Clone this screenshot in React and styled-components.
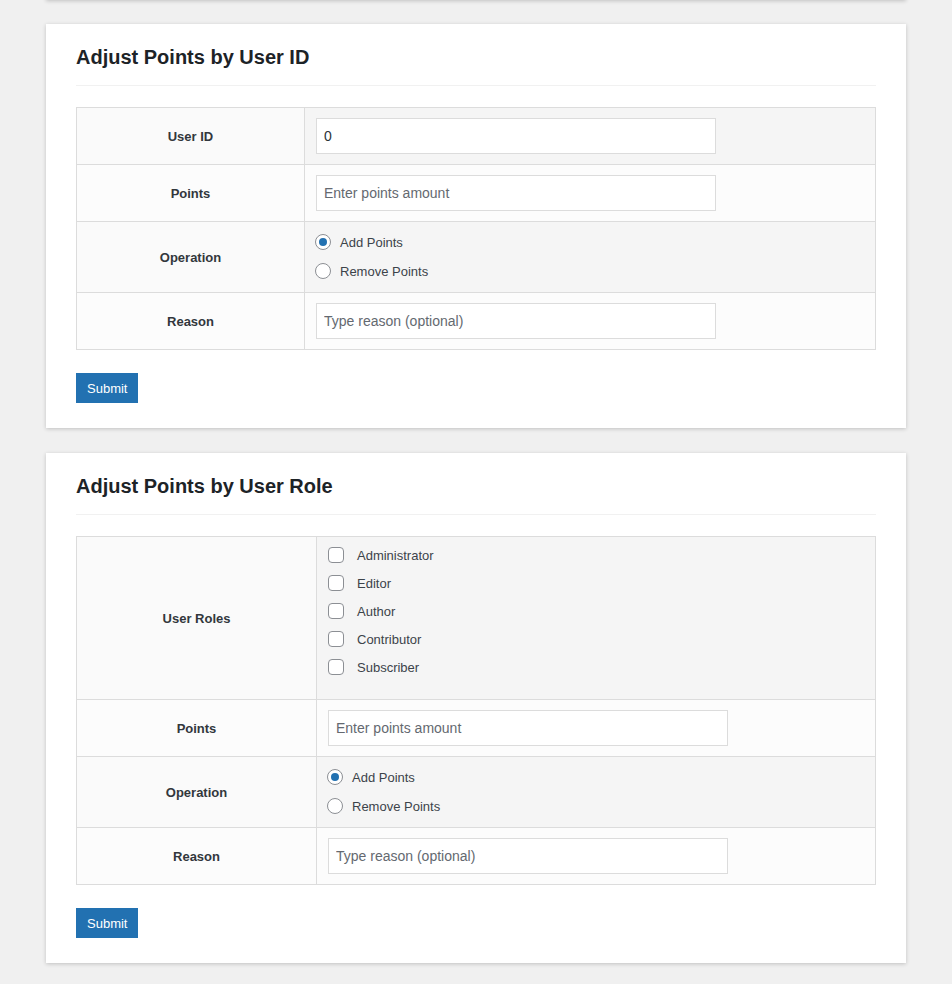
import React from "react";
import styled, { createGlobalStyle } from "styled-components";

const Global = createGlobalStyle`
  html, body { margin: 0; padding: 0; background: #f0f0f0; }
  body { font-family: "Liberation Sans", Arial, sans-serif; color: #3c434a; font-size: 14px; }
`;

const Page = styled.div`
  padding: 0 46px 21px;
  display: flex;
  flex-direction: column;
  gap: 25px;
`;

const PrevCard = styled.div`
  height: 20px;
  margin-top: -20px;
  margin-bottom: -1px;
  background: #fff;
  box-shadow: 0 1px 4px rgba(0, 0, 0, 0.2);
`;

const Card = styled.section`
  background: #fff;
  box-shadow: 0 1px 4px rgba(0, 0, 0, 0.2);
  padding: 20px 30px 25px;
`;

const Title = styled.h2`
  margin: 0;
  font-size: 20px;
  line-height: 26px;
  font-weight: 700;
  color: #1d2327;
  padding-bottom: 15px;
  border-bottom: 1px solid #f1f1f1;
  margin-bottom: 21px;
`;

const Table = styled.table`
  width: 100%;
  border-collapse: collapse;
  table-layout: fixed;
  border: 1px solid #dcdcdc;
`;

const Row = styled.tr``;

const Th = styled.th`
  width: ${(p) => p.$w - 23}px;
  background: ${(p) => (p.$odd ? "#fafafa" : "#fcfcfc")};
  border: 1px solid #dcdcdc;
  font-weight: 700;
  font-size: 13px;
  color: #32373c;
  text-align: center;
  vertical-align: middle;
  padding: 10px 11px;
`;

const Td = styled.td`
  background: ${(p) => (p.$odd ? "#f5f5f5" : "#fcfcfc")};
  border: 1px solid #dcdcdc;
  padding: ${(p) => (p.$tight ? "8px 11px 10px" : "10px 11px")};
  vertical-align: middle;
`;

const Input = styled.input`
  display: block;
  box-sizing: border-box;
  width: 400px;
  height: 36px;
  border: 1px solid #dcdcdc;
  border-radius: 0;
  background: #fff;
  padding: 0 7px;
  font-family: "Liberation Sans", Arial, sans-serif;
  font-size: 14px;
  color: #2c3338;
  outline: none;
  &::placeholder { color: #646970; opacity: 1; }
`;

const Options = styled.div`
  display: flex;
  flex-direction: column;
  gap: ${(p) => p.$gap}px;
  padding: ${(p) => p.$pad || "0"};
`;

const OptLabel = styled.label`
  display: flex;
  align-items: center;
  gap: ${(p) => p.$gap}px;
  height: 20px;
  font-size: 13px;
  color: #3c434a;
`;

const Radio = styled.span`
  box-sizing: border-box;
  width: 16px;
  height: 16px;
  border-radius: 50%;
  border: 1px solid #8c8f94;
  background: #fff;
  display: flex;
  align-items: center;
  justify-content: center;
  margin-left: -1px;
  &::after {
    content: "";
    width: 8px;
    height: 8px;
    border-radius: 50%;
    background: ${(p) => (p.$checked ? "#2271b1" : "transparent")};
  }
`;

const Check = styled.span`
  box-sizing: border-box;
  width: 16px;
  height: 16px;
  border-radius: 4px;
  border: 1px solid #8c8f94;
  background: #fff;
`;

const Button = styled.button`
  margin-top: 23px;
  height: 30px;
  padding: 0 11px;
  background: #2271b1;
  color: #fff;
  border: none;
  border-radius: 0;
  font-family: "Liberation Sans", Arial, sans-serif;
  font-size: 13px;
  cursor: pointer;
`;

const OperationRows = ({ w }) => (
  <>
    <Row>
      <Th $w={w}>Points</Th>
      <Td>
        <Input placeholder="Enter points amount" />
      </Td>
    </Row>
    <Row>
      <Th $w={w} $odd>Operation</Th>
      <Td $odd>
        <Options $gap={9} $pad="0 0 1px">
          <OptLabel $gap={9}>
            <Radio $checked />
            Add Points
          </OptLabel>
          <OptLabel $gap={9}>
            <Radio />
            Remove Points
          </OptLabel>
        </Options>
      </Td>
    </Row>
    <Row>
      <Th $w={w}>Reason</Th>
      <Td>
        <Input placeholder="Type reason (optional)" />
      </Td>
    </Row>
  </>
);

const roles = ["Administrator", "Editor", "Author", "Contributor", "Subscriber"];

export default function App() {
  return (
    <>
      <Global />
      <Page>
        <PrevCard />
        <Card>
          <Title>Adjust Points by User ID</Title>
          <Table>
            <tbody>
              <Row>
                <Th $w={228} $odd>User ID</Th>
                <Td $odd>
                  <Input defaultValue="0" />
                </Td>
              </Row>
              <OperationRows w={228} />
            </tbody>
          </Table>
          <Button>Submit</Button>
        </Card>
        <Card>
          <Title>Adjust Points by User Role</Title>
          <Table>
            <tbody>
              <Row>
                <Th $w={240} $odd>User Roles</Th>
                <Td $odd $tight>
                  <Options $gap={8} $pad="0 0 12px">
                    {roles.map((r) => (
                      <OptLabel key={r} $gap={13}>
                        <Check />
                        {r}
                      </OptLabel>
                    ))}
                  </Options>
                </Td>
              </Row>
              <OperationRows w={240} />
            </tbody>
          </Table>
          <Button>Submit</Button>
        </Card>
      </Page>
    </>
  );
}
